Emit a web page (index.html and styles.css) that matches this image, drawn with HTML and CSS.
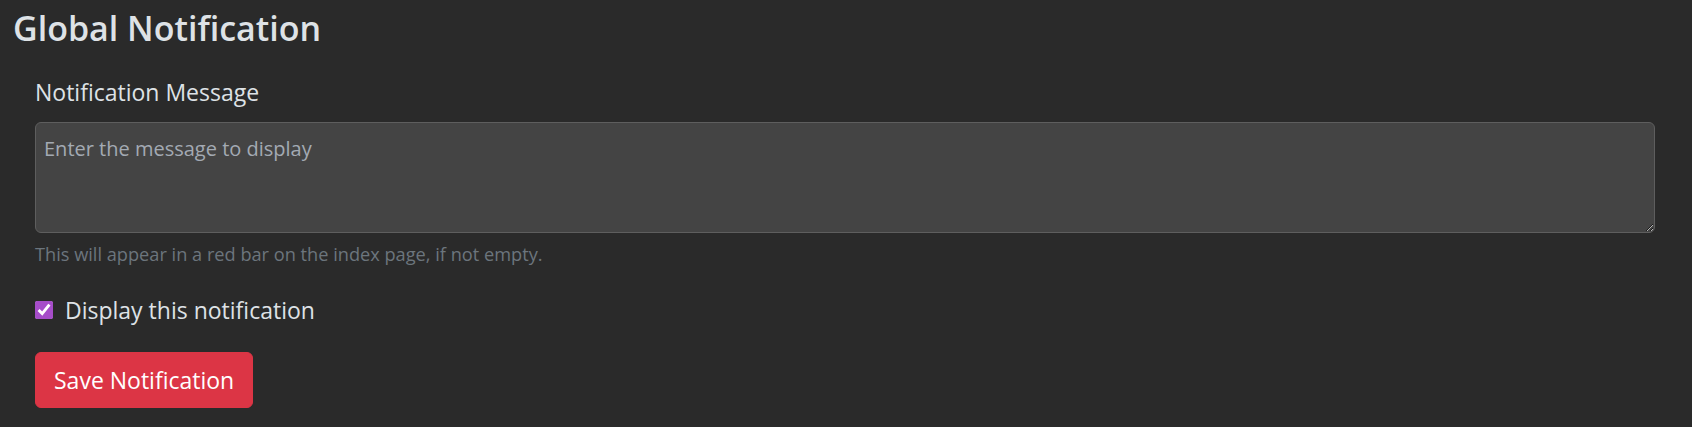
FILE: index.html
```html
<!DOCTYPE html>
<html lang="en">
<head>
    <meta charset="UTF-8">
    <meta name="viewport" content="width=device-width, initial-scale=1.0">
    <title>Global Notification</title>
    <link rel="stylesheet" href="styles.css">
</head>
<body>

    <main class="page">
        <h2 class="page-title">Global Notification</h2>

        <form class="notice-form">
            <div class="field">
                <label class="field-label" for="notice-msg">Notification Message</label>
                <textarea id="notice-msg" class="field-input" placeholder="Enter the message to display"></textarea>
                <div class="field-hint">This will appear in a red bar on the index page, if not empty.</div>
            </div>

            <div class="check-row">
                <input type="checkbox" id="notice-show" class="check-box" checked>
                <label for="notice-show" class="check-label">Display this notification</label>
            </div>

            <button type="button" class="btn-save">Save Notification</button>
        </form>
    </main>

</body>
</html>
```

FILE: styles.css
```css
body {
    margin: 0;
    background-color: #2a2a2a;
    color: #dee2e6;
    font-family: "Open Sans", "Noto Sans", sans-serif;
    font-size: 23px;
    line-height: 36px;
}
.page {
    padding: 8px 37px 0 35px;
}
.page-title {
    margin: 0 0 0 -22px;
    font-size: 34px;
    font-weight: 600;
    line-height: 41px;
}
.notice-form {
    margin-top: 25px;
}
.field-label {
    display: block;
    margin-bottom: 12px;
}
.field-input {
    display: block;
    box-sizing: border-box;
    width: 100%;
    height: 111px;
    padding: 11px 8px 7px;
    background-color: #444444;
    color: #dee2e6;
    border: 1px solid #5e5e5e;
    border-radius: 6px;
    font-family: inherit;
    font-size: 20px;
    line-height: 30px;
    resize: vertical;
}
.field-input::placeholder {
    color: #a3aab3;
}
.field-hint {
    margin-top: 6px;
    font-size: 18.2px;
    line-height: 31px;
    color: #6c757d;
}
.check-row {
    display: flex;
    align-items: center;
    gap: 12px;
    margin-top: 22px;
}
.check-box {
    width: 18px;
    height: 18px;
    margin: 0;
    accent-color: #a64dc9;
}
.btn-save {
    margin-top: 24px;
    padding: 9px 18px;
    background-color: #dc3545;
    color: #fff;
    border: 1px solid #dc3545;
    border-radius: 6px;
    font: inherit;
    cursor: pointer;
}
.btn-save:hover {
    background-color: #bb2d3b;
}
```
